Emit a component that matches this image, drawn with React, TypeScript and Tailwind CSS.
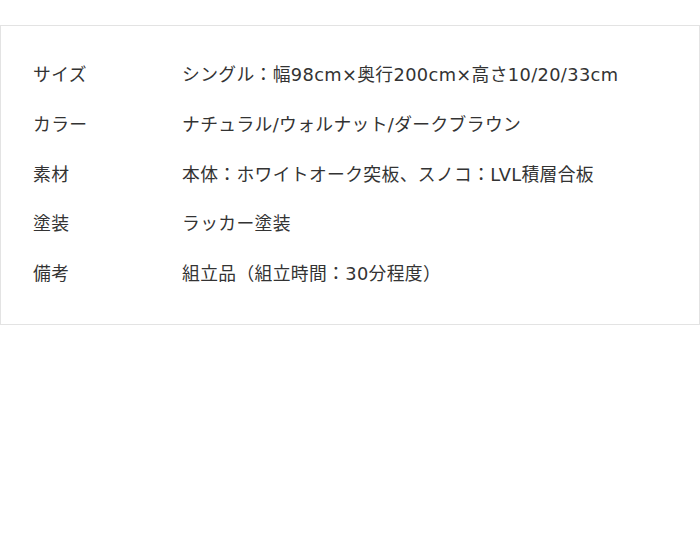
const specs = [
  { label: "サイズ", value: "シングル：幅98cm×奥行200cm×高さ10/20/33cm" },
  { label: "カラー", value: "ナチュラル/ウォルナット/ダークブラウン" },
  { label: "素材", value: "本体：ホワイトオーク突板、スノコ：LVL積層合板" },
  { label: "塗装", value: "ラッカー塗装" },
  { label: "備考", value: "組立品（組立時間：30分程度）" },
];

export default function App() {
  return (
    <div className="w-[700px] h-[538px] bg-white pt-[25px] font-['DejaVu_Sans','Noto_Sans_CJK_JP',sans-serif] text-[#333]">
      <div className="border border-[#e3e3e3] pt-[25px] pb-[25px] pl-[32px]">
        {specs.map((s) => (
          <div key={s.label} className="flex items-center h-[49.6px] text-[17.8px] tracking-[0.02em]">
            <div className="w-[149px] shrink-0">{s.label}</div>
            <div>{s.value}</div>
          </div>
        ))}
      </div>
    </div>
  );
}
